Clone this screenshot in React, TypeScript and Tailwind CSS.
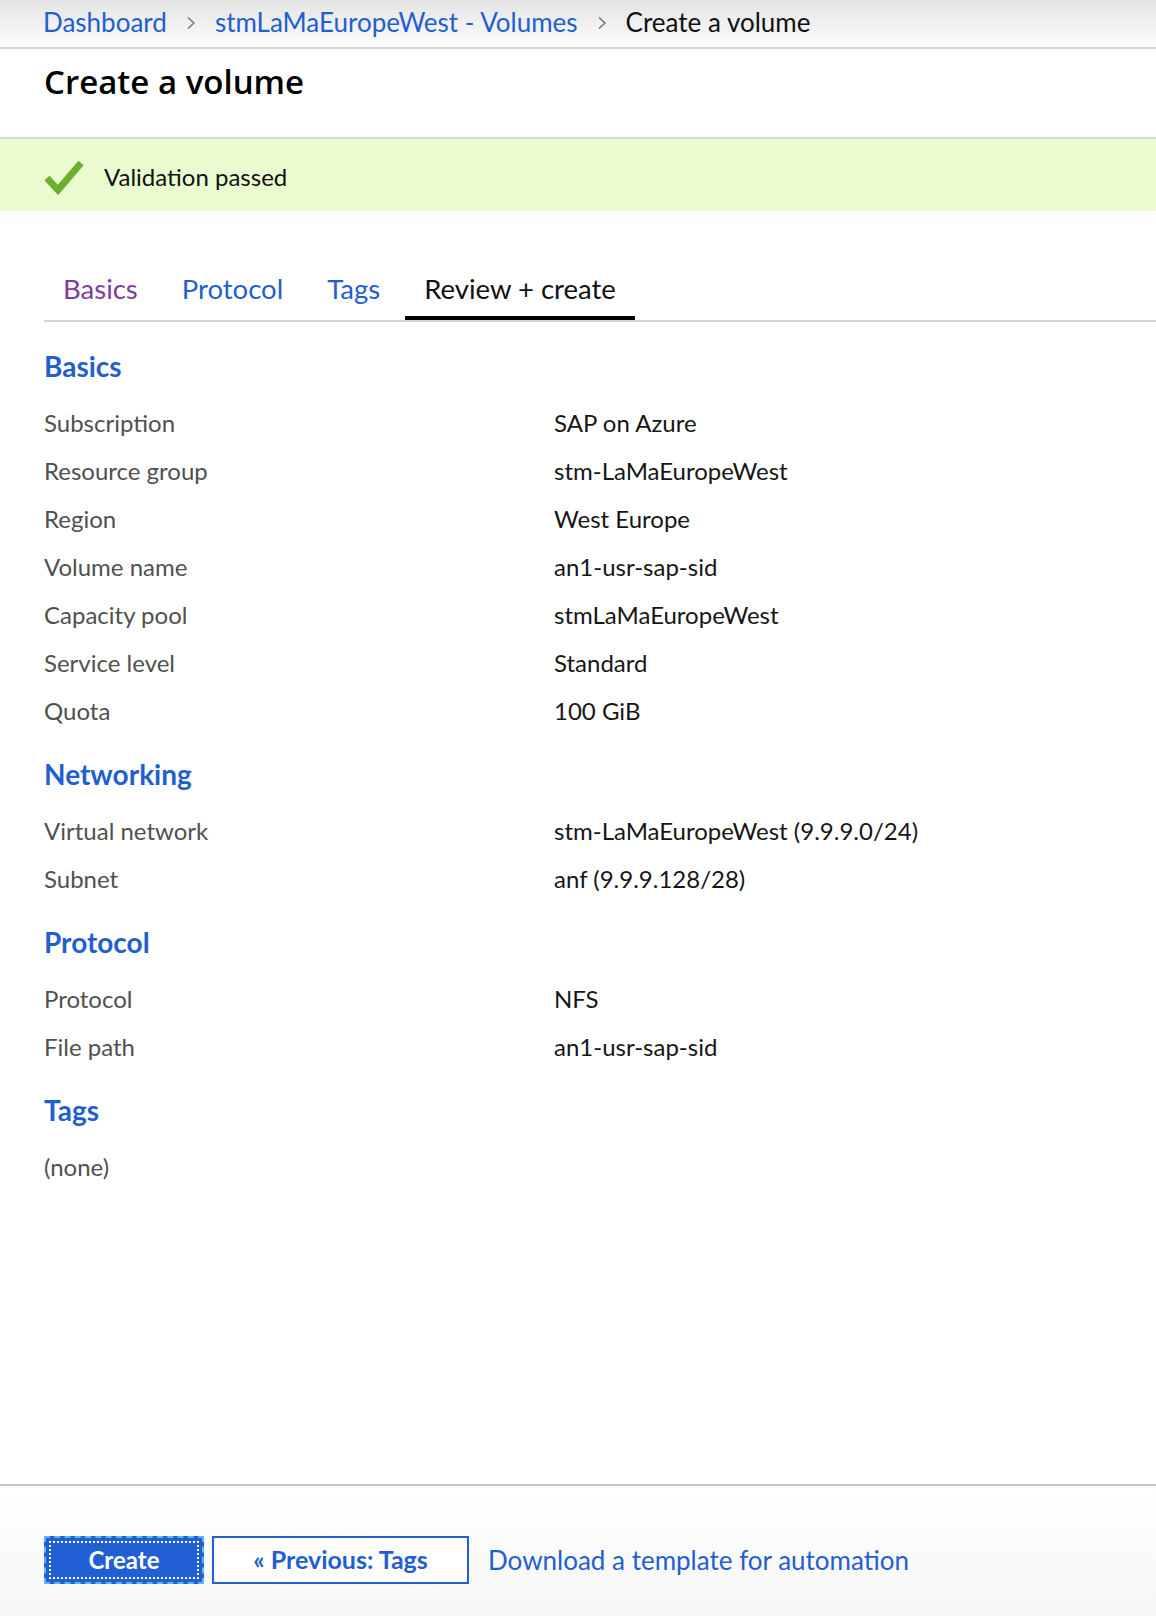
import type { ReactNode } from 'react';

interface Row {
  label: string;
  value: string;
}

interface Section {
  title: string;
  rows: Row[];
}

const sections: Section[] = [
  {
    title: 'Basics',
    rows: [
      { label: 'Subscription', value: 'SAP on Azure' },
      { label: 'Resource group', value: 'stm-LaMaEuropeWest' },
      { label: 'Region', value: 'West Europe' },
      { label: 'Volume name', value: 'an1-usr-sap-sid' },
      { label: 'Capacity pool', value: 'stmLaMaEuropeWest' },
      { label: 'Service level', value: 'Standard' },
      { label: 'Quota', value: '100 GiB' },
    ],
  },
  {
    title: 'Networking',
    rows: [
      { label: 'Virtual network', value: 'stm-LaMaEuropeWest (9.9.9.0/24)' },
      { label: 'Subnet', value: 'anf (9.9.9.128/28)' },
    ],
  },
  {
    title: 'Protocol',
    rows: [
      { label: 'Protocol', value: 'NFS' },
      { label: 'File path', value: 'an1-usr-sap-sid' },
    ],
  },
];

function Chevron() {
  return (
    <svg className="w-[12px] h-[16px] mx-[18px] text-[#6b6b6b]" viewBox="0 0 12 16" fill="none" stroke="currentColor">
      <path d="M3 2.5l6 5.5-6 5.5" strokeWidth={1.3} />
    </svg>
  );
}

function SectionHeading({ children }: { children: ReactNode }) {
  return (
    <h2 className="h-[40px] mt-[19px] mb-[13px] flex items-center text-[28px] font-bold text-[#1f5fcf] leading-none">
      {children}
    </h2>
  );
}

function SummaryRow({ row }: { row: Row }) {
  return (
    <div className="grid grid-cols-[510px_1fr] h-[48px] items-center text-[24px] leading-none">
      <span className="text-[#505050]">{row.label}</span>
      <span className="text-[#161616]">{row.value}</span>
    </div>
  );
}

export default function App() {
  const tabs = [
    { name: 'Basics', className: 'text-[#803d9f]' },
    { name: 'Protocol', className: 'text-[#1f5fcf]' },
    { name: 'Tags', className: 'text-[#1f5fcf]' },
  ];

  return (
    <div className="h-[1616px] w-[1156px] flex flex-col bg-white font-['Lato',sans-serif] overflow-hidden">
      {/* Breadcrumb */}
      <div className="h-[49px] flex items-center px-[43px] pb-[2px] bg-gradient-to-b from-[#e4e4e4] to-[#fcfcfc] border-b-2 border-[#d4d4d4] text-[26px]">
        <a className="text-[#1f5fcf]">Dashboard</a>
        <Chevron />
        <a className="text-[#1f5fcf]">stmLaMaEuropeWest - Volumes</a>
        <Chevron />
        <span className="text-[#111]">Create a volume</span>
      </div>

      {/* Title */}
      <div className="h-[90px] px-[44px] pt-[13px] border-b-2 border-[#d6d6d6]">
        <h1 className="font-['Open_Sans',sans-serif] text-[33px] font-semibold text-black leading-[40px]">Create a volume</h1>
      </div>

      {/* Validation banner */}
      <div className="h-[72px] flex items-center px-[44px] pt-[3px] bg-[#eafccf]">
        <svg className="w-[40px] h-[36px] text-[#6bb031]" viewBox="0 0 40 36" fill="none" stroke="currentColor">
          <path d="M3 19l11 12L37 4" strokeWidth={7} strokeLinejoin="miter" />
        </svg>
        <span className="ml-[20px] text-[24px] text-[#111]">Validation passed</span>
      </div>

      {/* Content */}
      <div className="flex-1 pl-[44px] pt-[50px]">
        <div className="flex gap-[6px] border-b-2 border-[#d4d4d4] text-[27.5px]">
          {tabs.map((t) => (
            <div key={t.name} className={`h-[59px] px-[19px] flex items-center border-b-4 border-transparent ${t.className}`}>
              {t.name}
            </div>
          ))}
          <div className="h-[59px] px-[19px] flex items-center border-b-4 border-black text-[#111]">
            Review + create
          </div>
        </div>

        <div className="pt-[5px]">
          {sections.map((s) => (
            <div key={s.title}>
              <SectionHeading>{s.title}</SectionHeading>
              {s.rows.map((r) => (
                <SummaryRow key={r.label} row={r} />
              ))}
            </div>
          ))}
          <SectionHeading>Tags</SectionHeading>
          <div className="h-[48px] flex items-center text-[24px] text-[#505050]">(none)</div>
        </div>
      </div>

      {/* Footer */}
      <div className="h-[132px] border-t-2 border-[#c4c4c4] bg-gradient-to-b from-white to-[#f6f6f6] px-[44px] pt-[50px]">
        <div className="flex items-center">
          <button className="relative w-[160px] h-[48px] bg-[#2160d4] border-2 border-dashed border-[#5ab8ee] text-white text-[24px] font-bold">
            <span className="absolute inset-[3px] border-2 border-dotted border-white" />
            Create
          </button>
          <button className="ml-[8px] w-[257px] h-[48px] border-2 border-[#2160d4] bg-white text-[#1f5fcf] text-[25px] font-bold">
            « Previous: Tags
          </button>
          <a className="ml-[19px] text-[26px] text-[#1f5fcf]">Download a template for automation</a>
        </div>
      </div>
    </div>
  );
}
